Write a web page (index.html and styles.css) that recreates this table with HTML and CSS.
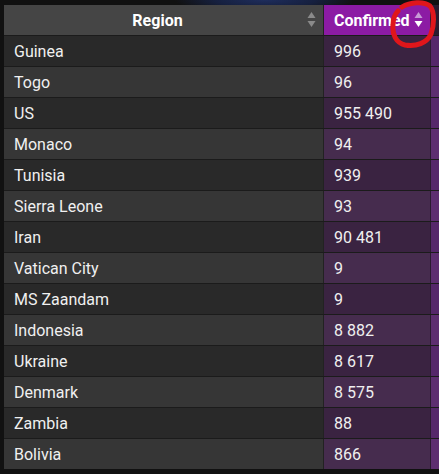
FILE: index.html
```html
<!DOCTYPE html>
<html>
<head>
<meta charset="utf-8">
<link rel="stylesheet" href="styles.css">
</head>
<body>
<div class="page">
  <div class="topband"></div>
  <div class="grid">
    <div class="th th-region"><span class="th-label">Region</span>
      <svg class="sort" width="9" height="16" viewBox="0 0 9 16"><path d="M4.5 0 L8.5 6 L0.5 6 Z" fill="#8a8a8a"/><path d="M0.5 9 L8.5 9 L4.5 15 Z" fill="#8a8a8a"/></svg>
    </div>
    <div class="th th-conf"><span class="th-label">Confirmed</span>
      <svg class="sort" width="9" height="16" viewBox="0 0 9 16"><path d="M4.5 0 L8.5 6 L0.5 6 Z" fill="#c79ad6"/><path d="M0.5 9 L8.5 9 L4.5 15 Z" fill="#ffffff"/></svg>
    </div>
    <div class="th th-extra"></div>

    <div class="td reg odd">Guinea</div><div class="td conf odd">996</div><div class="td extra odd"></div>
    <div class="td reg even">Togo</div><div class="td conf even">96</div><div class="td extra even"></div>
    <div class="td reg odd">US</div><div class="td conf odd">955 490</div><div class="td extra odd"></div>
    <div class="td reg even">Monaco</div><div class="td conf even">94</div><div class="td extra even"></div>
    <div class="td reg odd">Tunisia</div><div class="td conf odd">939</div><div class="td extra odd"></div>
    <div class="td reg even">Sierra Leone</div><div class="td conf even">93</div><div class="td extra even"></div>
    <div class="td reg odd">Iran</div><div class="td conf odd">90 481</div><div class="td extra odd"></div>
    <div class="td reg even">Vatican City</div><div class="td conf even">9</div><div class="td extra even"></div>
    <div class="td reg odd">MS Zaandam</div><div class="td conf odd">9</div><div class="td extra odd"></div>
    <div class="td reg even">Indonesia</div><div class="td conf even">8 882</div><div class="td extra even"></div>
    <div class="td reg odd">Ukraine</div><div class="td conf odd">8 617</div><div class="td extra odd"></div>
    <div class="td reg even">Denmark</div><div class="td conf even">8 575</div><div class="td extra even"></div>
    <div class="td reg odd">Zambia</div><div class="td conf odd">88</div><div class="td extra odd"></div>
    <div class="td reg even">Bolivia</div><div class="td conf even">866</div><div class="td extra even"></div>
  </div>
  <svg class="circle" width="50" height="52" viewBox="386 0 50 52">
    <path d="M402 7 C410 2 424 1 430 6 C435 12 434 26 431 34 C427 43 416 47 405 45 C396 43 392 34 393 25 C393 19 395 14 398 11" fill="none" stroke="#e0161b" stroke-width="5" stroke-linecap="round"/>
  </svg>
</div>
</body>
</html>
```
FILE: styles.css
```css
html, body {
  margin: 0;
  padding: 0;
  background: #111111;
  overflow: hidden;
}
.page {
  position: relative;
  width: 439px;
  height: 474px;
  overflow: hidden;
  font-family: Roboto, "Liberation Sans", sans-serif;
  color: #f0f0f0;
}
.topband {
  height: 5px;
  background: radial-gradient(ellipse 90px 14px at 265px 0px, #1e2d5c 0%, #16203f 55%, #111111 100%);
}
.grid {
  display: grid;
  grid-template-columns: 319px 107px 1fr;
  grid-auto-rows: 30px;
  row-gap: 1px;
  margin-left: 4px;
  background: #1b1b1b;
}
.th {
  display: flex;
  align-items: center;
  font-weight: 700;
  font-size: 16px;
  color: #ffffff;
  position: relative;
}
.th-region {
  background: #454545;
  justify-content: center;
  padding-right: 12px;
}
.th-region .sort {
  position: absolute;
  right: 7px;
  top: 7px;
}
.th-conf {
  background: #8c1ba4;
  padding-left: 10px;
  border-left: 1px solid #222;
}
.th-conf .sort {
  position: absolute;
  right: 7px;
  top: 7px;
}
.th-extra {
  background: #2a1c30;
}
.td {
  display: flex;
  align-items: center;
  font-size: 16px;
}
.reg {
  padding-left: 10px;
}
.reg.odd { background: #292929; }
.reg.even { background: #363636; }
.conf {
  padding-left: 10px;
  border-left: 1px solid #222;
}
.conf.odd { background: #3a2341; }
.conf.even { background: #462c4e; }
.extra {
  border-left: 1px solid #2a1a30;
}
.extra.odd { background: #55276a; }
.extra.even { background: #5d2e70; }
.circle {
  position: absolute;
  left: 386px;
  top: 0;
}
```
